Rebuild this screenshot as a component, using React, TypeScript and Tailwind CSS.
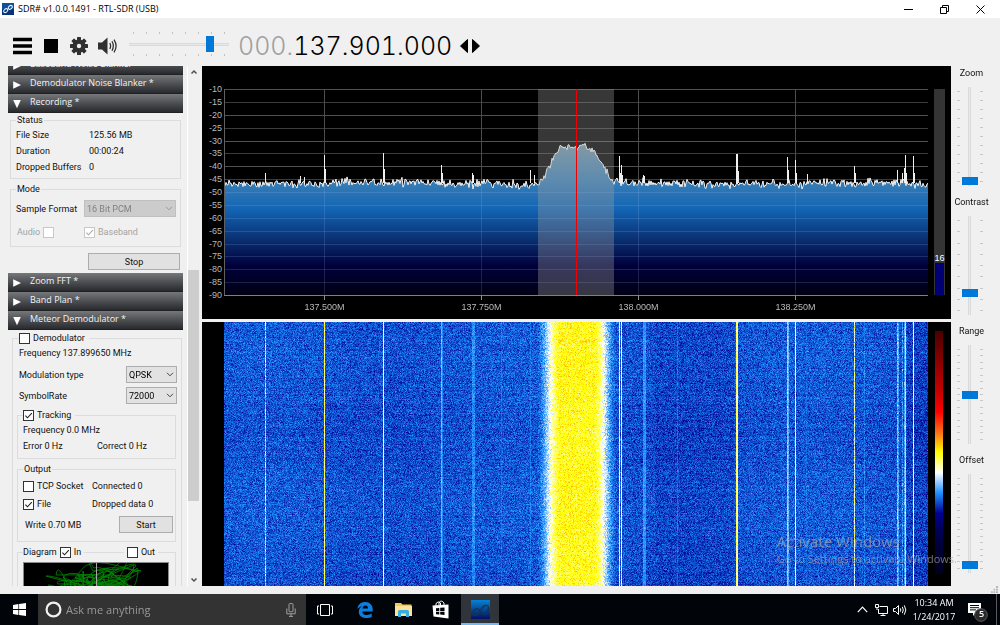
import React, { useEffect, useRef } from "react";

/* ---------- deterministic noise ---------- */

function makeRandom(seed: number) {
  let s = seed >>> 0;
  return () => {
    s = (s + 0x6d2b79f5) >>> 0;
    let t = s;
    t = Math.imul(t ^ (t >>> 15), t | 1);
    t ^= t + Math.imul(t ^ (t >>> 7), t | 61);
    return ((t ^ (t >>> 14)) >>> 0) / 4294967296;
  };
}

/* ---------- spectrum data ---------- */

const PLOT_W = 704;
const PLOT_H = 207;

const BUMP: [number, number][] = [
  [314, 95], [321, 87], [326, 75], [331, 66], [336, 60], [341, 58], [346, 57], [353, 58],
  [361, 57], [366, 60], [371, 64], [376, 71], [381, 80], [385, 88], [390, 91], [394, 92],
];

/* x, top */
const SPIKES: [number, number][] = [
  [41, 84], [76, 87], [80, 88], [100, 66], [101, 80], [159, 64], [160, 80], [217, 76], [218, 84],
  [248, 84], [249, 86], [306, 81], [310, 86], [395, 67], [396, 84], [397, 76], [398, 86], [419, 86],
  [420, 87], [512, 65], [513, 65], [514, 82], [563, 68], [564, 81], [571, 71], [572, 84], [583, 85],
  [630, 77], [631, 84], [673, 81], [678, 84], [680, 79], [681, 66], [682, 84], [689, 67], [690, 84],
];

function bumpLevel(x: number): number | null {
  for (let i = 1; i < BUMP.length; i++) {
    const [x0, y0] = BUMP[i - 1];
    const [x1, y1] = BUMP[i];
    if (x >= x0 && x <= x1) return y0 + ((y1 - y0) * (x - x0)) / (x1 - x0);
  }
  return null;
}

function buildTrace(): string {
  const rand = makeRandom(11);
  const points: string[] = [];
  for (let x = 0; x <= PLOT_W; x++) {
    const swell = Math.sin(x / 37) * 0.6 + Math.sin(x / 11) * 0.5;
    const noise = (rand() + rand() + rand() - 1.5) * 4.2;
    const bump = bumpLevel(x);
    const y = bump !== null ? bump + noise * 0.8 : 94.5 + swell + noise;
    points.push(`${x} ${y.toFixed(1)}`);
  }
  return points.join("L");
}

const TRACE = buildTrace();
const LEVELS = Array.from({ length: 17 }, (_, i) => -10 - i * 5);
const FREQS = [
  { label: "137.500M", x: 100.5 },
  { label: "137.750M", x: 257.5 },
  { label: "138.000M", x: 414.5 },
  { label: "138.250M", x: 571.5 },
];

function SpectrumPlot() {
  return (
    <svg viewBox={`0 0 ${PLOT_W} ${PLOT_H}`} preserveAspectRatio="none" className="block h-full w-full">
      <defs>
        <linearGradient id="fill" gradientUnits="userSpaceOnUse" x1="0" y1="55" x2="0" y2="207">
          <stop offset="0" stopColor="#7596a8" />
          <stop offset="0.24" stopColor="#3a7fb6" />
          <stop offset="0.43" stopColor="#1264b4" />
          <stop offset="0.62" stopColor="#0a3274" />
          <stop offset="0.8" stopColor="#00003c" />
          <stop offset="1" stopColor="#000012" />
        </linearGradient>
      </defs>
      {LEVELS.map((l, i) => (
        <rect key={l} x="0" y={Math.round(i * 12.875)} width={PLOT_W} height="1" fill={i % 2 ? "#3c3c3c" : "#505050"} />
      ))}
      {FREQS.map((f) => (
        <rect key={f.label} x={f.x - 0.5} y="0" width="1" height={PLOT_H} fill="#4c4c4c" />
      ))}
      <path d={`M0 207L${TRACE}L704 207Z`} fill="url(#fill)" />
      {LEVELS.slice(8).map((l, i) => (
        <rect key={l} x="0" y={Math.round((i + 8) * 12.875)} width={PLOT_W} height="1" fill="#b4c8ff" opacity="0.16" />
      ))}
      {FREQS.map((f) => (
        <rect key={f.label} x={f.x - 0.5} y="95" width="1" height="112" fill="#b4c8ff" opacity="0.16" />
      ))}
      <path d={`M${TRACE}`} fill="none" stroke="#f4f4f4" strokeWidth="1" />
      {SPIKES.map(([x, y]) => (
        <rect key={x} x={x} y={y} width="1" height={94 - y} fill="#f0f0f0" />
      ))}
      <rect x="314" y="0" width="76" height={PLOT_H} fill="#a0a0a0" opacity="0.34" />
      <rect x="352" y="0" width="1" height={PLOT_H} fill="#f00000" />
      <rect x="0" y="0" width="1" height={PLOT_H} fill="#606060" />
      <rect x="0" y="206" width={PLOT_W} height="1" fill="#808080" />
    </svg>
  );
}

function SpectrumPanel() {
  return (
    <section className="flex min-h-0 bg-black pt-[23px] pb-[23px] font-['Liberation_Sans',sans-serif] text-[9px] text-[#b8b8b8]">
      <ul className="-my-1 flex w-[22px] flex-col justify-between pr-0.5 text-right leading-[9px]">
        {LEVELS.map((l) => (
          <li key={l}>{l}</li>
        ))}
      </ul>
      <div className="relative min-w-0 flex-1">
        <SpectrumPlot />
        {FREQS.map((f) => (
          <span
            key={f.label}
            className="absolute top-full flex -translate-x-1/2 flex-col items-center leading-[14px] before:h-1 before:w-px before:bg-[#909090]"
            style={{ left: `${(f.x / PLOT_W) * 100}%` }}
          >
            {f.label}
          </span>
        ))}
      </div>
      <div className="flex w-[23px] justify-center pb-px">
        <div className="flex w-[11px] flex-col justify-end bg-[#343434] text-center text-white">
          <span className="leading-[10px]">16</span>
          <div className="mx-px h-8 bg-[#000074]" />
        </div>
      </div>
    </section>
  );
}

/* ---------- waterfall ---------- */

const PALETTE: [number, number, number][] = [
  [0, 0, 32], [0, 0, 48], [0, 0, 80], [0, 0, 145], [30, 144, 255], [255, 255, 255], [255, 255, 0],
  [254, 109, 22], [255, 0, 0], [198, 0, 0], [159, 0, 0], [117, 0, 0], [74, 0, 0],
];

/* x, width, level, jitter */
const CARRIERS: [number, number, number, number][] = [
  [41, 1, 4.6, 0.7], [100, 1, 5.6, 0.5], [159, 1, 5.35, 0.5], [217, 1, 4.3, 0.3], [218, 1, 3.95, 0.2],
  [248, 3, 4.0, 0.3], [277, 1, 3.8, 0.3], [306, 1, 3.85, 0.3], [395, 1, 4.8, 0.3], [397, 1, 4.9, 0.3],
  [419, 3, 4.05, 0.25], [453, 1, 3.75, 0.3], [512, 1, 5.6, 0.4], [513, 1, 5.1, 0.4], [563, 1, 4.5, 0.3],
  [564, 1, 4.3, 0.3], [571, 1, 4.9, 0.3], [582, 1, 3.75, 0.3], [630, 1, 5.1, 0.9], [640, 1, 3.9, 0.4],
  [673, 1, 4.4, 0.5], [674, 1, 4.2, 0.4], [678, 1, 4.0, 0.5], [680, 1, 4.2, 0.4], [681, 1, 4.7, 0.3],
  [689, 1, 5.0, 0.4],
];

function Waterfall() {
  const ref = useRef<HTMLCanvasElement>(null);
  useEffect(() => {
    const ctx = ref.current?.getContext("2d");
    if (!ctx) return;
    const w = 704;
    const h = 264;
    const rand = makeRandom(77);
    const img = ctx.createImageData(w, h);
    const base = new Float32Array(w);
    const jitter = new Float32Array(w);
    for (let x = 0; x < w; x++) {
      base[x] = 3.57 + Math.sin(x / 45 + 1) * 0.04 + (x > 430 && x < 510 ? -0.07 : 0) + (x > 682 ? -0.12 : 0);
      jitter[x] = 0.44;
      const d = Math.abs(x - 352.5);
      if (d < 43) {
        const t = Math.max(0, Math.min(1, (41 - d) / 25));
        base[x] += 2.35 * t * t * (3 - 2 * t);
      }
    }
    for (const [cx, cw, level, j] of CARRIERS) {
      for (let x = cx; x < cx + cw; x++) {
        base[x] = level;
        jitter[x] = j;
      }
    }
    for (let y = 0; y < h; y++) {
      const row = (rand() - 0.5) * 0.12 + Math.sin(y / 23) * 0.03;
      for (let x = 0; x < w; x++) {
        const n = rand() + rand() + rand() - 1.5;
        const v = Math.max(2, Math.min(7, base[x] + row + n * jitter[x]));
        const i = Math.min(6, Math.floor(v));
        const f = v - i;
        const a = PALETTE[i];
        const b = PALETTE[i + 1];
        const o = (y * w + x) * 4;
        img.data[o] = a[0] + (b[0] - a[0]) * f;
        img.data[o + 1] = a[1] + (b[1] - a[1]) * f;
        img.data[o + 2] = a[2] + (b[2] - a[2]) * f;
        img.data[o + 3] = 255;
      }
    }
    ctx.putImageData(img, 0, 0);
  }, []);
  return (
    <section className="flex min-h-0 bg-black pl-[22px]">
      <div className="min-h-0 min-w-0 flex-1">
        <canvas ref={ref} width={704} height={264} className="block h-full w-full" />
      </div>
      <div className="flex w-[23px] pt-[9px] pb-3 pl-[7px]">
        <div className="w-2 bg-[linear-gradient(to_top,#000020,#000030,#000050,#000091,#1e90ff,#ffffff,#ffff00,#fe6d16,#ff0000,#c60000,#9f0000,#750000,#4a0000)]" />
      </div>
    </section>
  );
}

/* ---------- small controls ---------- */

function Check({ label, checked, disabled, before }: { label: string; checked?: boolean; disabled?: boolean; before?: boolean }) {
  return (
    <label className={`flex items-center gap-[3px] ${disabled ? "text-[#a3a3a3]" : ""} ${before ? "flex-row-reverse" : ""}`}>
      <span className="relative size-[11px]">
        <input
          type="checkbox"
          defaultChecked={checked}
          disabled={disabled}
          className="peer block size-[11px] appearance-none border border-[#333] bg-white disabled:border-[#c8c8c8]"
        />
        <svg viewBox="0 0 11 11" className="pointer-events-none absolute inset-0 hidden peer-checked:block">
          <path d="M2.4 5.6 4.5 7.8 8.8 3.2" fill="none" stroke={disabled ? "#a8a8a8" : "#222"} strokeWidth="1.1" />
        </svg>
      </span>
      {label}
    </label>
  );
}

function Combo({ label, value, className, disabled }: { label: string; value: string; className: string; disabled?: boolean }) {
  return (
    <label className="flex h-[17px] items-center justify-between">
      {label}
      <span className={`relative h-[17px] ${className}`}>
        <select
          disabled={disabled}
          className="block h-full w-full appearance-none border border-[#adadad] bg-[#e2e2e2] pl-0.5 text-black disabled:border-[#c0c0c0] disabled:bg-[#cccccc] disabled:text-[#808080] disabled:opacity-100"
        >
          <option>{value}</option>
        </select>
        <svg viewBox="0 0 8 5" className="pointer-events-none absolute top-1.5 right-[3px] h-[5px] w-2">
          <path d="M1 0.8 4 3.8 7 0.8" fill="none" stroke={disabled ? "#999" : "#444"} strokeWidth="1" />
        </svg>
      </span>
    </label>
  );
}

function PanelHeader({ title, open }: { title: string; open?: boolean }) {
  return (
    <button className="flex h-[19px] w-full shrink-0 items-center gap-2 border-b border-[#1f2024] bg-linear-to-b from-[#77787a] to-[#292a2f] pb-0.5 pl-1 text-left font-['Open_Sans',sans-serif] text-[9px] font-medium text-[#f4f4f4]">
      <svg viewBox="0 0 10 10" className="mt-1 size-2.5 shrink-0" fill="#fff">
        {open ? <path d="M1.2 1H8.8L5 9.2Z" /> : <path d="M1.2 1.2V8.8L9 5Z" />}
      </svg>
      {title}
    </button>
  );
}

function HTicks() {
  return (
    <div className="flex justify-between px-1">
      {Array.from({ length: 8 }, (_, i) => (
        <i key={i} className="h-0.5 w-px bg-[#c4c4c4]" />
      ))}
    </div>
  );
}

function VTicks({ count }: { count: number }) {
  return (
    <div className="flex w-[3px] flex-col justify-between py-1">
      {Array.from({ length: count }, (_, i) => (
        <i key={i} className="h-px bg-[#c8c8c8]" />
      ))}
    </div>
  );
}

function VSlider({ label, value, ticks }: { label: string; value: number; ticks: number }) {
  return (
    <label className="flex flex-1 flex-col items-center">
      <span className="pl-1 leading-[13px]">{label}</span>
      <span className="mt-[7px] flex h-[99px] gap-px">
        <VTicks count={ticks} />
        <input
          type="range"
          defaultValue={value}
          className="h-[99px] w-[18px] appearance-none bg-[linear-gradient(to_right,#d0d3d3,#e8eaea,#d0d3d3)] bg-[length:3px_100%] bg-center bg-no-repeat [direction:rtl] [writing-mode:vertical-lr] [&::-webkit-slider-thumb]:h-2 [&::-webkit-slider-thumb]:w-4 [&::-webkit-slider-thumb]:appearance-none [&::-webkit-slider-thumb]:bg-[#0078d7]"
        />
        <VTicks count={ticks} />
      </span>
    </label>
  );
}

/* ---------- side panel ---------- */

const GREEN_TRACE = (() => {
  const rand = makeRandom(5);
  let d = "";
  for (let i = 0; i < 95; i++) {
    const right = rand() > 0.5;
    const x = (right ? 98 : 50) + (rand() + rand() - 1) * 36;
    const y = 2 + rand() * 50;
    d += i ? `Q${(x + (rand() - 0.5) * 24).toFixed(0)} ${(y + (rand() - 0.5) * 44).toFixed(0)} ${x.toFixed(0)} ${y.toFixed(0)}` : `M${x.toFixed(0)} ${y.toFixed(0)}`;
  }
  return d;
})();

const fieldset = "border border-[#dcdcdc]";
const pushButton = "h-[17px] border border-[#adadad] bg-[#e1e1e1]";

function SidePanel() {
  return (
    <aside className="w-[175px] shrink-0 overflow-hidden leading-3">
      <div className="-mt-2.5 flex flex-col">
        <PanelHeader title="Baseband Noise Blanker *" />
        <PanelHeader title="Demodulator Noise Blanker *" />
        <PanelHeader title="Recording *" open />

        <div className="flex flex-col px-0.5 pt-px pb-[3px]">
          <fieldset className={`${fieldset} pr-1 pb-[3px] pl-[5px]`}>
            <legend className="px-px">Status</legend>
            <dl className="mt-px grid grid-cols-[73px_1fr] leading-4">
              <dt>File Size</dt>
              <dd>125.56 MB</dd>
              <dt>Duration</dt>
              <dd>00:00:24</dd>
              <dt>Dropped Buffers</dt>
              <dd>0</dd>
            </dl>
          </fieldset>
          <fieldset className={`${fieldset} mt-1 pr-1 pb-2 pl-[5px]`}>
            <legend className="px-px">Mode</legend>
            <div className="mt-[5px]">
              <Combo label="Sample Format" value="16 Bit PCM" className="w-[92px]" disabled />
            </div>
            <div className="mt-[9px] grid grid-cols-[67px_1fr] pl-px">
              <span className="flex">
                <Check label="Audio" disabled before />
              </span>
              <Check label="Baseband" checked disabled />
            </div>
          </fieldset>
          <button className={`${pushButton} mt-1.5 mr-px w-[92px] self-end`}>Stop</button>
        </div>

        <PanelHeader title="Zoom FFT *" />
        <PanelHeader title="Band Plan *" />
        <PanelHeader title="Meteor Demodulator *" open />

        <fieldset className={`${fieldset} mt-0.5 mr-px ml-1 pr-1 pb-1 pl-[3px]`}>
          <legend className="ml-[3px] pr-1">
            <Check label="Demodulator" />
          </legend>
          <div className="flex flex-col pl-[3px]">
            <p className="mt-[3px]">Frequency 137.899650 MHz</p>
            <div className="mt-[7px] flex flex-col gap-1">
              <Combo label="Modulation type" value="QPSK" className="w-[51px]" />
              <Combo label="SymbolRate" value="72000" className="w-[51px]" />
            </div>
          </div>

          <fieldset className={`${fieldset} mt-[5px] mr-px ml-px px-[5px] pb-1.5`}>
            <legend className="pr-1">
              <Check label="Tracking" checked />
            </legend>
            <p className="leading-[18px]">Frequency 0.0 MHz</p>
            <p className="mt-px flex">
              <span className="w-[74px]">Error 0 Hz</span>
              <span>Correct 0 Hz</span>
            </p>
          </fieldset>

          <fieldset className={`${fieldset} mt-1 mr-px ml-px px-[5px] pb-2`}>
            <legend className="px-px">Output</legend>
            <div className="grid grid-cols-[69px_1fr] gap-y-1.5 pt-[5px]">
              <Check label="TCP Socket" />
              <span>Connected 0</span>
              <Check label="File" checked />
              <span>Dropped data 0</span>
            </div>
            <div className="mt-1.5 flex items-center justify-between pl-0.5">
              <span>Write 0.70 MB</span>
              <button className={`${pushButton} -mr-[3px] w-[54px]`}>Start</button>
            </div>
          </fieldset>

          <fieldset className={`${fieldset} mt-1 mr-px ml-px px-[5px]`}>
            <legend className="flex w-full items-center gap-[3px]">
              <span>Diagram</span>
              <Check label="In" checked />
              <i className="mt-px h-px flex-1 bg-[#dcdcdc]" />
              <Check label="Out" />
              <i className="mt-px h-px w-3 bg-[#dcdcdc]" />
            </legend>
            <svg viewBox="0 0 144 60" className="mt-1 block w-[146px] border border-[#8a8a8a] bg-black">
              <path d={GREEN_TRACE} fill="none" stroke="#008a00" strokeWidth="0.8" />
              <path d="M72.5 0V60" stroke="#a8a8a8" />
            </svg>
          </fieldset>
        </fieldset>
      </div>
    </aside>
  );
}

function ScrollBar() {
  return (
    <div className="mr-[3px] ml-1 flex w-3 shrink-0 flex-col items-center border-l border-white">
      <svg viewBox="0 0 8 8" className="mt-0.5 size-2" fill="none" stroke="#505050" strokeWidth="1.5">
        <path d="M1.5 5.5 4 3 6.5 5.5" />
      </svg>
      <div className="flex-[194]" />
      <div className="w-full flex-[231] bg-[#cdcdcd]" />
      <div className="flex-[75]" />
      <svg viewBox="0 0 8 8" className="mb-0.5 size-2" fill="none" stroke="#505050" strokeWidth="1.5">
        <path d="M1.5 2.5 4 5 6.5 2.5" />
      </svg>
    </div>
  );
}

/* ---------- chrome ---------- */

function AppGlyph({ className }: { className: string }) {
  return (
    <svg viewBox="0 0 12 12" className={className}>
      <rect width="12" height="12" fill="#0f4f9c" />
      <rect y="6" width="12" height="6" fill="#0a3478" />
      <g fill="none" stroke="#e8f4ff" strokeWidth="1.1">
        <ellipse cx="3.7" cy="7.6" rx="2.3" ry="1.6" transform="rotate(-40 3.7 7.6)" />
        <ellipse cx="8.3" cy="4.4" rx="2.3" ry="1.6" transform="rotate(-40 8.3 4.4)" />
      </g>
    </svg>
  );
}

function TitleBar() {
  return (
    <header className="flex h-[18px] shrink-0 items-center bg-white pr-0.5 pl-0.5 font-['Open_Sans',sans-serif] text-[9px] text-black">
      <AppGlyph className="size-3" />
      <h1 className="flex-1 pl-1">SDR# v1.0.0.1491 - RTL-SDR (USB)</h1>
      <button aria-label="Minimize" className="flex h-full w-9 items-center justify-center">
        <svg viewBox="0 0 9 9" className="size-[9px]"><path d="M0 4.5H9" stroke="#000" /></svg>
      </button>
      <button aria-label="Restore" className="flex h-full w-9 items-center justify-center">
        <svg viewBox="0 0 9 9" className="size-[9px]" fill="none" stroke="#000"><path d="M0.5 2.5H6.5V8.5H0.5ZM2.5 2.5V0.5H8.5V6.5H6.5" /></svg>
      </button>
      <button aria-label="Close" className="flex h-full w-9 items-center justify-center">
        <svg viewBox="0 0 9 9" className="size-[9px]"><path d="M0.5 0.5 8.5 8.5M8.5 0.5 0.5 8.5" stroke="#000" /></svg>
      </button>
    </header>
  );
}

function Toolbar() {
  return (
    <div className="flex h-12 shrink-0 items-center pt-2 pl-[13px]">
      <button aria-label="Menu">
        <svg viewBox="0 0 19 18" className="block h-[18px] w-[19px]"><path d="M0 2.5H19M0 9H19M0 15.5H19" stroke="#000" strokeWidth="3.6" /></svg>
      </button>
      <button aria-label="Stop" className="ml-3">
        <svg viewBox="0 0 14 14" className="block size-3.5"><rect width="14" height="14" /></svg>
      </button>
      <button aria-label="Settings" className="ml-3">
        <svg viewBox="0 0 18 18" className="block size-[18px]" fill="#303030">
          {[0, 45, 90, 135].map((a) => (
            <rect key={a} x="7" y="0" width="4" height="18" rx="0.6" transform={`rotate(${a} 9 9)`} />
          ))}
          <circle cx="9" cy="9" r="6.6" />
          <circle cx="9" cy="9" r="2.2" fill="#f0f0f0" />
        </svg>
      </button>
      <button aria-label="Mute" className="ml-2.5">
        <svg viewBox="0 0 20 18" className="block h-[18px] w-5" fill="none" stroke="#303030" strokeWidth="1.3">
          <path d="M0 5.5H4L9.5 0.5V17.5L4 12.5H0Z" fill="#303030" stroke="none" />
          <path d="M11.8 6Q13.4 9 11.8 12M14 4.3Q16.6 9 14 13.7M16 2.6Q20.2 9 16 15.4" />
        </svg>
      </button>
      <div className="ml-[11px] flex w-[100px] flex-col gap-px pb-1">
        <HTicks />
        <input
          type="range"
          aria-label="Volume"
          defaultValue={84}
          className="h-[18px] w-full appearance-none bg-[linear-gradient(#d0d3d3,#e8eaea,#d0d3d3)] bg-[length:100%_3px] bg-center bg-no-repeat [&::-webkit-slider-thumb]:h-4 [&::-webkit-slider-thumb]:w-2 [&::-webkit-slider-thumb]:appearance-none [&::-webkit-slider-thumb]:bg-[#0078d7]"
        />
        <HTicks />
      </div>
      <p className="ml-[9px] pb-px font-[Inter,sans-serif] text-[25px] leading-6 font-light whitespace-pre text-black tabular-nums">
        <span className="text-[#a0a0a0]">000.</span>137.901.000
      </p>
      <button aria-label="Tuning style" className="ml-2">
        <svg viewBox="0 0 20 14" className="block h-3.5 w-5"><path d="M7.5 0.5V13.5L0.5 7ZM12.5 0.5V13.5L19.5 7Z" stroke="#000" strokeLinejoin="round" /></svg>
      </button>
    </div>
  );
}

function Taskbar() {
  const slot = "flex w-[38px] items-center justify-center";
  return (
    <footer className="flex h-[31px] shrink-0 bg-[#010409] font-['Open_Sans',sans-serif] text-white">
      <button aria-label="Start" className={slot}>
        <svg viewBox="0 0 13 13" className="size-[13px]" fill="#fff">
          <path d="M0 1.9 5.4 1.1V6.1H0ZM6.1 1 13 0V6.1H6.1ZM0 6.9H5.4V11.9L0 11.1ZM6.1 6.9H13V13L6.1 12Z" />
        </svg>
      </button>
      <label className="flex w-[268px] items-center gap-1 bg-[#333333] pr-2.5 pl-[7px]">
        <svg viewBox="0 0 17 17" className="size-[17px] shrink-0"><circle cx="8.5" cy="8.5" r="6.9" fill="none" stroke="#f0f0f0" strokeWidth="2.2" /></svg>
        <input aria-label="Search" placeholder="Ask me anything" className="min-w-0 flex-1 bg-transparent pt-px text-[11px] placeholder:text-[#999]" />
        <svg viewBox="0 0 10 14" className="h-3.5 w-2.5 shrink-0" fill="none" stroke="#a0a0a0">
          <rect x="3" y="0.6" width="4" height="8.2" rx="0.8" />
          <path d="M0.8 5.5V10.8H9.2V5.5M5 10.8V13.2M3 13.4H7" />
        </svg>
      </label>
      <button aria-label="Task View" className={slot}>
        <svg viewBox="0 0 16 12" className="h-3 w-4" fill="none" stroke="#fff"><path d="M3.5 0.5H12.5V11.5H3.5ZM2 2H0.5V10H2M14 2H15.5V10H14" /></svg>
      </button>
      <button aria-label="Edge" className="flex w-[42px] items-center justify-center">
        <svg viewBox="0 0 16 16" className="size-4" fill="#0a7fe0">
          <path d="M0.3 7.1C1 2.6 4 0 8.2 0 12.800 0 15.700 3.200 15.700 7.600V9.400H5.300C5.500 12 7.500 13 9.900 13 11.700 13 13.300 12.500 14.700 11.600V14.900C13.200 15.700 11.300 16 9.200 16 4.800 16 1.800 13.600 1.800 9.700 1.800 7.300 3 5.300 5.100 4.200 3.300 4.500 1.600 5.400 0.300 7.100ZM5.500 6.400H11C11 4.500 10.100 3.500 8.400 3.500 6.900 3.500 5.800 4.600 5.500 6.400Z" />
        </svg>
      </button>
      <button aria-label="File Explorer" className="flex w-[34px] items-center justify-center">
        <svg viewBox="0 0 17 15" className="h-[15px] w-[17px]">
          <path d="M0 1H6L7.500 2.500H16.500V14H0Z" fill="#f5c852" />
          <path d="M0 4H17V14H0Z" fill="#fde397" />
          <path d="M3 14V9.500Q3 8 4.500 8H12.500Q14 8 14 9.500V15H11V11.500H6V15H3Z" fill="#35aee8" />
        </svg>
      </button>
      <button aria-label="Store" className="flex w-[41px] items-center justify-center">
        <svg viewBox="0 0 17 19" className="h-[19px] w-[17px]">
          <path d="M4 6V3.500Q6 0.500 8.500 3V5M7 5V2.500Q9.500 -0.500 12 3V5" fill="none" stroke="#fff" />
          <path d="M0.500 5.500 16.500 4.500V18.500L1.500 16.500Z" fill="#fff" />
          <path d="M4 8.200 7.300 7.900V10.900H4ZM8.200 7.800 12.500 7.400V10.900H8.200ZM4 11.700H7.300V14.500L4 14.200ZM8.200 11.700H12.500V15L8.200 14.600Z" fill="#010409" />
        </svg>
      </button>
      <button aria-label="SDR#" className="flex w-[38px] items-center justify-center border-b-2 border-[#76b9ed] bg-[#30353c]">
        <svg viewBox="0 0 19 19" className="mt-0.5 size-[19px]">
          <defs>
            <linearGradient id="tile" x1="0" y1="0" x2="0" y2="1">
              <stop offset="0" stopColor="#0782d2" />
              <stop offset="1" stopColor="#04105e" />
            </linearGradient>
          </defs>
          <rect width="19" height="19" fill="url(#tile)" />
          <g fill="none" stroke="#173450" strokeWidth="1.3">
            <path d="M2 13C2 9 6 7.500 8 10S11 14.500 13 14.500 17 12 18 8" />
            <path d="M1 14C3 16.500 6 15.500 8 13S11 6 14.500 5.500 18 8 16.500 10" />
          </g>
        </svg>
      </button>
      <div className="flex-1" />
      <div className="flex items-center gap-[5px]">
        <svg viewBox="0 0 11 7" className="mr-0.5 h-[7px] w-[11px]" fill="none" stroke="#fff" strokeWidth="1.2"><path d="M0.8 6.200 5.500 1.200 10.200 6.200" /></svg>
        <svg viewBox="0 0 13 12" className="h-3 w-[13px]" fill="none" stroke="#fff">
          <path d="M4.500 2.500H12.500V9.500H3.500V5M8 9.500V11.500M5.500 11.500H10.500M0.500 0.500H3.500V3.500H0.500ZM2 3.500V6" />
        </svg>
        <svg viewBox="0 0 14 12" className="h-3 w-3.5" fill="none" stroke="#fff">
          <path d="M0.500 4.500H2.500L5.500 1.500V10.500L2.500 7.500H0.500ZM7.300 4.300Q8.300 6 7.300 7.700M9.300 2.800Q11.300 6 9.300 9.200M11.300 1.300Q14.300 6 11.300 10.700" />
        </svg>
      </div>
      <div className="ml-[5px] flex w-11 flex-col items-center justify-center text-[9px] leading-[14px] whitespace-nowrap">
        <time>10:34 AM</time>
        <time>1/24/2017</time>
      </div>
      <button aria-label="Notifications" className="relative ml-3 flex w-5 items-center">
        <svg viewBox="0 0 20 20" className="mt-1 size-5 shrink-0">
          <path d="M0 1H13V11H7.500L5 14V11H0Z" fill="#fff" />
          <path d="M2 3.500H11M2 5.700H11M2 7.900H8" stroke="#010409" />
          <circle cx="13" cy="13" r="6.300" fill="#2a2a2a" stroke="#5a5a5a" />
        </svg>
        <span className="absolute top-[14px] left-[11px] text-[9px] leading-3 font-semibold">5</span>
      </button>
      <div className="mr-[3px] ml-2 w-px bg-[#5a5a5a]" />
    </footer>
  );
}

export default function App() {
  return (
    <div className="relative flex h-screen flex-col overflow-hidden bg-[#f0f0f0] font-[Roboto,sans-serif] text-[9px] text-[#111]">
      <TitleBar />
      <Toolbar />
      <main className="flex min-h-0 flex-1 pl-2">
        <SidePanel />
        <ScrollBar />
        <div className="grid min-w-0 flex-1 grid-rows-[minmax(0,253fr)_minmax(0,264fr)] gap-[3px]">
          <SpectrumPanel />
          <Waterfall />
        </div>
        <div className="flex w-[49px] flex-col pt-px pr-3 pb-[3px]">
          <VSlider label="Zoom" value={1} ticks={11} />
          <VSlider label="Contrast" value={20} ticks={9} />
          <VSlider label="Range" value={50} ticks={15} />
          <VSlider label="Offset" value={4} ticks={15} />
        </div>
      </main>
      <div className="flex h-2 shrink-0 items-start justify-end pr-0.5">
        <svg viewBox="0 0 7 7" className="size-[7px]" fill="#b8b8b8">
          <path d="M5 0H7V2H5ZM5 2.700H7V4.500H5ZM5 5.200H7V7H5ZM2.500 2.700H4.300V4.500H2.500ZM2.500 5.200H4.300V7H2.500ZM0 5.200H1.800V7H0Z" />
        </svg>
      </div>
      <Taskbar />
      <div className="pointer-events-none absolute right-[43px] bottom-[58px] font-['Open_Sans',sans-serif] text-[#a4a4a4]/70">
        <p className="text-[15px] leading-5">Activate Windows</p>
        <p className="text-[11px] leading-4">Go to Settings to activate Windows.</p>
      </div>
    </div>
  );
}
